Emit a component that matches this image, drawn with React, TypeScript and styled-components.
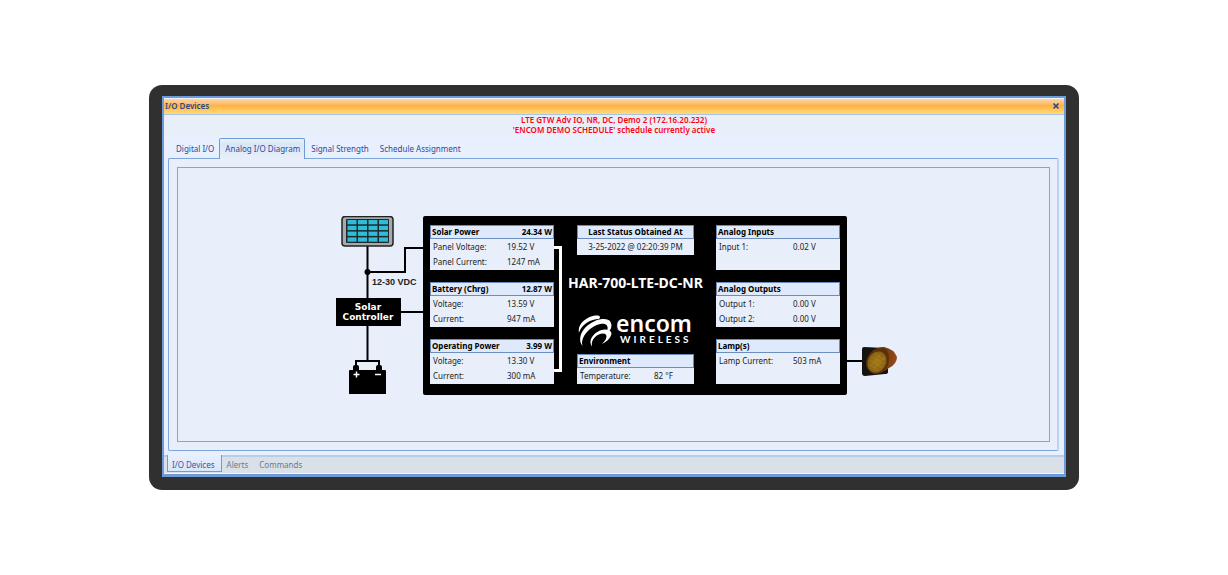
import React from "react";
import styled, { createGlobalStyle, css } from "styled-components";

const GlobalStyle = createGlobalStyle`
  * { box-sizing: border-box; }
  body {
    margin: 0;
    background: #fff;
    font-family: "Noto Sans", "Open Sans", sans-serif;
    font-size: 8px;
    line-height: 10px;
    color: #222;
  }
  button {
    font: inherit;
    color: inherit;
    cursor: pointer;
  }
`;

const Page = styled.main`
  padding: 85px 149px;
`;

const Bezel = styled.div`
  padding: 11px 13px 13px;
  border-radius: 13px;
  background: #303030;
`;

const Window = styled.section`
  display: flex;
  flex-direction: column;
  border: 2px solid #6f9ad8;
  border-bottom-width: 3px;
  background: #e8efff;
`;

const TitleBar = styled.header`
  display: flex;
  align-items: center;
  justify-content: space-between;
  height: 17px;
  padding: 0 4px 1px 1px;
  border-top: 1px solid #eef3fc;
  border-bottom: 1px solid #a9c2ea;
  background: linear-gradient(#ffd3a0, #ffbd6c 35%, #ffaf40 40%, #ffdc78);
`;

const WindowTitle = styled.h1`
  margin: 0;
  font-size: 8px;
  font-weight: 600;
  color: #2a4a86;
`;

const CloseButton = styled.button`
  display: flex;
  padding: 0;
  border: 0;
  background: none;
`;

const Notice = styled.p`
  margin: 0;
  height: 20px;
  background: #e8eff9;
  color: #ff0010;
  font-weight: 600;
  text-align: center;
`;

const TopTabs = styled.nav`
  display: flex;
  align-items: flex-end;
  position: relative;
  z-index: 1;
  margin: 3px 0 -1px 6px;
`;

const TopTab = styled.button<{ $active?: boolean }>`
  height: 21px;
  padding: 0 4px 0 5px;
  border: 1px solid transparent;
  border-bottom: 0;
  background: none;
  color: #2c4b94;
  ${(p) =>
    p.$active &&
    css`
      border-color: #6f9ad8;
      border-radius: 2px 2px 0 0;
      background: linear-gradient(#eef4fd, #d9e6f8 25%, #e8effa);
    `}
`;

const TabPanel = styled.div`
  margin: 0 5px 4px 4px;
  padding: 8px 7px 8px 8px;
  border: 1px solid #7fa6dc;
  border-right: 2px solid #bdd2f0;
  border-radius: 2px;
  background: #e8effa;
`;

const Canvas = styled.div`
  display: flex;
  justify-content: center;
  padding: 48px 0 46px 7px;
  border: 1px solid #8aa5cb;
`;

const BottomTabs = styled.nav`
  display: flex;
  height: 19px;
  padding: 0 3px 1px;
  border-top: 2px solid #b9cde8;
  border-bottom: 1px solid #eef3fc;
  background: #d9e0e8;
`;

const BottomTab = styled.button<{ $active?: boolean }>`
  padding: 1px 6px 0 5px;
  border: 0;
  background: none;
  color: #6b7a90;
  ${(p) =>
    p.$active &&
    css`
      margin-top: -2px;
      padding: 3px 6px 0 4px;
      border: solid #6f9ad8;
      border-width: 0 1px 1px;
      background: linear-gradient(#e8efff, #d9e6fa);
      color: #2c5aa8;
    `}
`;

const Board = styled.div`
  display: flex;
  padding: 9px 7px 11px;
  border-radius: 2px;
  background: #000;
`;

const Column = styled.div<{ $width: number }>`
  display: flex;
  flex-direction: column;
  align-items: center;
  gap: 12px;
  width: ${(p) => p.$width}px;
`;

const CenterColumn = styled(Column)`
  gap: 0;
  margin: 0 22px 0 15px;
`;

const Bracket = styled.div`
  width: 8px;
  margin: 21px 0 12px;
  border: 3px solid #fff;
  border-left: 0;
`;

const Card = styled.section<{ $short?: boolean }>`
  width: 100%;
  min-height: ${(p) => (p.$short ? 30 : 45)}px;
  background: #e8effa;
`;

const CardHead = styled.h2<{ $centered?: boolean }>`
  display: flex;
  justify-content: ${(p) => (p.$centered ? "center" : "space-between")};
  align-items: center;
  height: 14px;
  margin: 0;
  padding: 0 1px;
  border: 1px solid #6c8ebf;
  background: #deeafb;
  color: #000;
  font-size: 8px;
`;

const Readings = styled.dl`
  display: grid;
  grid-template-columns: 74px 1fr;
  grid-auto-rows: 15px;
  align-items: center;
  margin: 0;
  padding-left: 3px;
  white-space: nowrap;
`;

const Reading = styled.dd`
  margin: 0;
`;

const Stamp = styled.p`
  margin: 0;
  line-height: 16px;
  text-align: center;
`;

const Model = styled.h2`
  margin: 19px 0 21px;
  color: #fff;
  font-size: 14px;
  line-height: 18px;
  white-space: nowrap;
`;

const CardBlock = ({ title, total, rows, short }: { title: string; total?: string; rows: [string, string][]; short?: boolean }) => (
  <Card $short={short}>
    <CardHead>
      <span>{title}</span>
      {total && <span>{total}</span>}
    </CardHead>
    <Readings>
      {rows.map(([label, value]) => (
        <React.Fragment key={label}>
          <dt>{label}</dt>
          <Reading>{value}</Reading>
        </React.Fragment>
      ))}
    </Readings>
  </Card>
);

const SupplyDrawing = () => (
  <svg width="87" height="179" viewBox="0 0 87 179">
    <g fill="none" stroke="#000" strokeWidth="2">
      <path d="M31.500 30V145M31 56H69V32H87M65 96H87M20 152V145H43V152" />
    </g>
    <circle cx="31.500" cy="56" r="3" />
    <rect x="6" y="0.500" width="51" height="29.500" rx="3" fill="#a4aaae" stroke="#222" strokeWidth="1.500" />
    <rect x="10" y="3" width="43" height="24" rx="1" fill="#20282c" />
    <g fill="#2fbcd8">
      {[0, 1, 2, 3].map((row) =>
        [0, 1, 2, 3].map((col) => (
          <rect key={`${row}${col}`} x={11.5 + col * 10.5} y={4 + row * 5.8} width="9" height="4.300" />
        ))
      )}
    </g>
    <rect x="0" y="82" width="65" height="28" />
    <g fill="#fff" fontFamily="DejaVu Sans, sans-serif" fontSize="9" fontWeight="700" textAnchor="middle">
      <text x="32" y="94">Solar</text>
      <text x="32" y="104">Controller</text>
    </g>
    <text x="36" y="69" fontFamily="Liberation Sans, sans-serif" fontSize="9" fontWeight="700" fill="#222">12-30 VDC</text>
    <path d="M13 155q0-1 1-1h3v-3q0-2 2-2h2q2 0 2 2v3h17v-3q0-2 2-2h2q2 0 2 2v3h3q1 0 1 1v23H13z" />
    <path d="M17.500 158.500h6M20.500 155.500v6M39 158.500h6" stroke="#fff" strokeWidth="1.500" />
  </svg>
);

const LampDrawing = () => (
  <svg width="51" height="179" viewBox="0 0 51 179">
    <defs>
      <radialGradient id="lens">
        <stop offset="0" stopColor="#a07a18" />
        <stop offset="1" stopColor="#8a6014" />
      </radialGradient>
      <linearGradient id="visor" x2="1">
        <stop offset="0" stopColor="#3a2008" />
        <stop offset="1" stopColor="#9a4c18" />
      </linearGradient>
    </defs>
    <path d="M0 145H18" stroke="#000" strokeWidth="2" />
    <path d="M15 133q0-2 2-2l21 1q3 1 3 4v20q0 2-3 2l-20 2q-3 0-3-3z" fill="#15120f" />
    <path d="M19 145Q23 131 37 131Q47 133 50 141Q50 148 42 152Q34 158 27 158Q19 155 19 145z" fill="url(#visor)" />
    <path d="M19 146Q23 132 37 132Q42 134 42 143Q41 157 28 158Q19 156 19 146z" fill="#5a3208" />
    <ellipse cx="30" cy="146" rx="9" ry="11" transform="rotate(30 30 146)" fill="url(#lens)" />
    <path d="M23 144l13 8M24 140l13 8M27 137l11 7M23 149l9 6M23 150l11-12M26 154l12-13" stroke="#b69330" strokeWidth=".6" opacity=".6" />
  </svg>
);

const LogoSvg = styled.svg`
  overflow: visible;
  margin-bottom: auto;
`;

const EncomLogo = () => (
  <LogoSvg width="117" height="35" viewBox="0 0 117 35" role="img" aria-label="encom wireless">
    <g fill="#fff">
      <path d="M2 19.500C0 10 12 2 21 2.500Q24.500 3.500 22 6C14 6 5 11 2 19.500z" />
      <path d="M5.500 33C-2 23 10 8 25 6Q34 5 34.500 12Q34.500 18 28 21.500Q32 16 30 12.500C25 6 2 19 5.500 33z" />
      <path d="M15 33.500C10 26 19 17 28 16.500Q34.500 16.500 34.500 21Q33 27 25 31Q31 25 29 21.500C25 18 13 24 15 33.500z" />
    </g>
    <text x="39" y="19" fill="#fff" fontFamily="Noto Sans, sans-serif" fontSize="23" fontWeight="600">encom</text>
    <text x="43" y="30" fill="#fff" fontFamily="Lato, sans-serif" fontSize="10" fontWeight="700" letterSpacing="3">WIRELESS</text>
  </LogoSvg>
);

export default function App() {
  return (
    <>
      <GlobalStyle />
      <Page>
        <Bezel>
          <Window>
            <TitleBar>
              <WindowTitle>I/O Devices</WindowTitle>
              <CloseButton aria-label="Close">
                <svg width="8" height="8" viewBox="0 0 8 8">
                  <path d="M1.500 1.500l5 5M6.500 1.500l-5 5" fill="none" stroke="#1f4594" strokeWidth="1.500" />
                </svg>
              </CloseButton>
            </TitleBar>
            <Notice>
              LTE GTW Adv IO, NR, DC, Demo 2 (172.16.20.232)
              <br />
              'ENCOM DEMO SCHEDULE' schedule currently active
            </Notice>
            <TopTabs>
              <TopTab>Digital I/O</TopTab>
              <TopTab $active>Analog I/O Diagram</TopTab>
              <TopTab>Signal Strength</TopTab>
              <TopTab>Schedule Assignment</TopTab>
            </TopTabs>
            <TabPanel>
              <Canvas>
                <SupplyDrawing />
                <Board>
                  <Column $width={124}>
                    <CardBlock title="Solar Power" total="24.34 W" rows={[["Panel Voltage:", "19.52 V"], ["Panel Current:", "1247 mA"]]} />
                    <CardBlock title="Battery (Chrg)" total="12.87 W" rows={[["Voltage:", "13.59 V"], ["Current:", "947 mA"]]} />
                    <CardBlock title="Operating Power" total="3.99 W" rows={[["Voltage:", "13.30 V"], ["Current:", "300 mA"]]} />
                  </Column>
                  <Bracket />
                  <CenterColumn $width={117}>
                    <Card $short>
                      <CardHead $centered>Last Status Obtained At</CardHead>
                      <Stamp>3-25-2022 @ 02:20:39 PM</Stamp>
                    </Card>
                    <Model>HAR-700-LTE-DC-NR</Model>
                    <EncomLogo />
                    <CardBlock short title="Environment" rows={[["Temperature:", "82 °F"]]} />
                  </CenterColumn>
                  <Column $width={124}>
                    <CardBlock title="Analog Inputs" rows={[["Input 1:", "0.02 V"]]} />
                    <CardBlock title="Analog Outputs" rows={[["Output 1:", "0.00 V"], ["Output 2:", "0.00 V"]]} />
                    <CardBlock title="Lamp(s)" rows={[["Lamp Current:", "503 mA"]]} />
                  </Column>
                </Board>
                <LampDrawing />
              </Canvas>
            </TabPanel>
            <BottomTabs>
              <BottomTab $active>I/O Devices</BottomTab>
              <BottomTab>Alerts</BottomTab>
              <BottomTab>Commands</BottomTab>
            </BottomTabs>
          </Window>
        </Bezel>
      </Page>
    </>
  );
}
